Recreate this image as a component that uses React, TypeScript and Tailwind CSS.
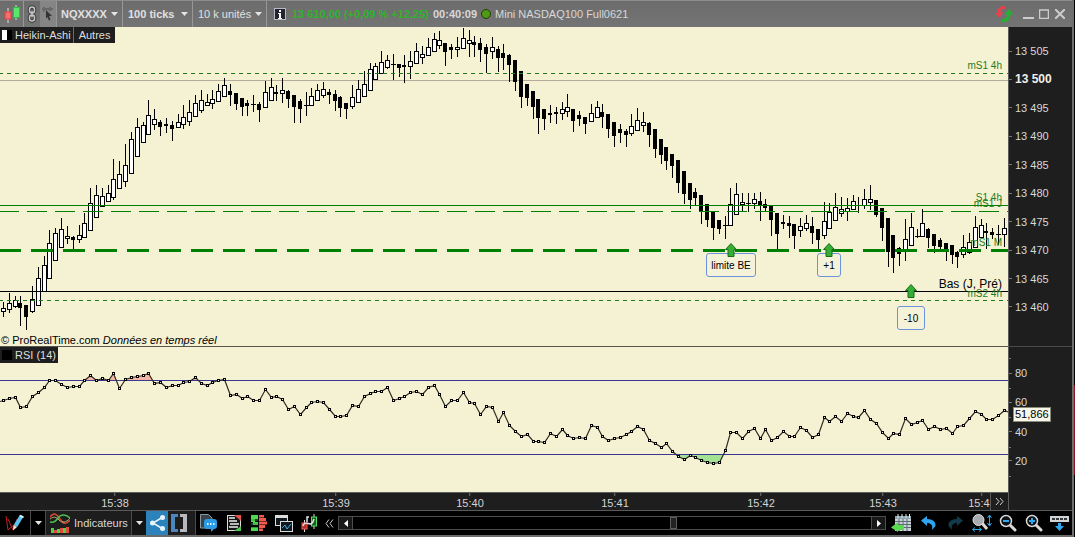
import type { ReactNode } from "react";

type Candle = [high: number, top: number, bottom: number, low: number, up: 0 | 1];

// Heikin-Ashi candles, in plot units
const candles: Candle[] = [
  [302, 308, 311, 316, 1], [293, 303, 309, 312, 1], [296, 300, 306, 307, 1], [296, 303, 307, 325, 0],
  [305, 305, 316, 329, 0], [286, 299, 311, 312, 1], [267, 278, 305, 305, 1], [256, 265, 291, 291, 1],
  [230, 243, 278, 278, 1], [228, 233, 260, 260, 1], [218, 229, 247, 247, 1], [226, 236, 238, 243, 1],
  [236, 237, 239, 249, 0], [225, 235, 239, 242, 1], [213, 223, 237, 237, 1], [188, 203, 230, 230, 1],
  [185, 195, 217, 217, 1], [188, 196, 206, 206, 1], [185, 193, 201, 201, 1], [159, 179, 197, 199, 1],
  [161, 174, 188, 188, 1], [144, 165, 181, 186, 1], [132, 139, 173, 173, 1], [118, 127, 156, 156, 1],
  [122, 125, 142, 142, 1], [100, 115, 134, 134, 1], [109, 119, 124, 129, 1], [120, 122, 126, 135, 0],
  [118, 124, 125, 132, 0], [121, 125, 128, 140, 0], [114, 122, 127, 127, 1], [105, 117, 124, 128, 1],
  [100, 112, 121, 125, 1], [95, 103, 116, 116, 1], [90, 100, 110, 112, 1], [94, 102, 105, 105, 1],
  [90, 99, 103, 108, 1], [84, 91, 101, 101, 1], [78, 85, 96, 96, 1], [84, 91, 94, 105, 0],
  [93, 93, 103, 109, 0], [98, 98, 106, 115, 0], [100, 103, 105, 115, 0], [95, 104, 104, 111, 0],
  [102, 104, 109, 121, 0], [81, 92, 107, 107, 1], [78, 87, 100, 100, 1], [85, 92, 93, 100, 0],
  [78, 90, 93, 102, 1], [90, 91, 98, 107, 0], [95, 95, 106, 122, 0], [99, 101, 108, 122, 0],
  [92, 105, 105, 115, 0], [88, 96, 105, 105, 1], [84, 90, 100, 100, 1], [82, 89, 95, 97, 1],
  [89, 92, 94, 103, 0], [90, 94, 100, 110, 0], [96, 97, 107, 116, 0], [103, 103, 108, 118, 0],
  [85, 97, 106, 108, 1], [80, 89, 102, 102, 1], [71, 84, 96, 96, 1], [63, 69, 90, 90, 1],
  [63, 66, 79, 79, 1], [51, 62, 73, 73, 1], [55, 60, 67, 68, 1], [54, 64, 64, 79, 0],
  [64, 64, 67, 76, 0], [55, 65, 66, 82, 0], [51, 61, 66, 78, 1], [43, 51, 63, 63, 1],
  [46, 54, 57, 63, 1], [38, 47, 55, 55, 1], [33, 39, 51, 51, 1], [31, 40, 45, 48, 1],
  [43, 43, 51, 65, 0], [44, 47, 49, 58, 0], [37, 47, 49, 56, 1], [28, 38, 48, 48, 1],
  [30, 40, 43, 56, 1], [36, 42, 44, 56, 0], [38, 43, 49, 61, 0], [44, 47, 53, 72, 0],
  [37, 47, 51, 58, 1], [46, 49, 57, 71, 0], [44, 53, 57, 69, 0], [54, 55, 64, 81, 0],
  [60, 60, 81, 90, 0], [71, 71, 96, 107, 0], [84, 84, 97, 105, 0], [91, 91, 106, 118, 0],
  [99, 99, 117, 133, 0], [109, 109, 118, 129, 0], [105, 113, 114, 122, 0], [107, 112, 113, 123, 0],
  [102, 109, 113, 119, 1], [94, 107, 111, 116, 1], [109, 109, 120, 131, 0], [111, 115, 118, 125, 0],
  [117, 117, 123, 133, 0], [104, 113, 121, 121, 1], [101, 107, 117, 117, 1], [104, 112, 116, 127, 0],
  [114, 114, 128, 137, 0], [122, 122, 135, 146, 0], [124, 129, 132, 142, 0], [129, 131, 134, 146, 0],
  [114, 126, 133, 135, 1], [108, 120, 130, 130, 1], [112, 122, 125, 131, 1], [122, 123, 134, 146, 0],
  [129, 129, 148, 157, 0], [139, 139, 154, 163, 0], [147, 147, 160, 169, 0], [154, 154, 165, 177, 0],
  [160, 160, 182, 192, 0], [171, 171, 193, 203, 0], [183, 183, 199, 208, 0], [188, 192, 197, 204, 0],
  [195, 195, 211, 223, 0], [204, 204, 219, 226, 0], [212, 212, 227, 239, 0], [220, 220, 228, 233, 0],
  [216, 225, 225, 238, 0], [188, 204, 225, 225, 1], [183, 194, 214, 214, 1], [193, 202, 204, 210, 1],
  [193, 203, 203, 211, 0], [193, 199, 203, 208, 1], [192, 201, 205, 220, 0], [199, 204, 207, 211, 0],
  [206, 206, 219, 235, 0], [213, 213, 233, 248, 0], [215, 222, 223, 228, 0], [216, 223, 225, 237, 0],
  [224, 224, 235, 248, 0], [218, 226, 230, 236, 1], [215, 223, 228, 230, 1], [217, 226, 232, 243, 0],
  [229, 229, 239, 248, 0], [202, 221, 235, 238, 1], [203, 212, 228, 228, 1], [193, 207, 220, 220, 1],
  [197, 209, 213, 216, 1], [198, 208, 211, 220, 1], [195, 201, 209, 209, 1], [197, 205, 205, 212, 0],
  [189, 199, 205, 208, 1], [185, 199, 202, 209, 1], [200, 200, 214, 216, 0], [208, 208, 227, 240, 0],
  [218, 218, 251, 266, 0], [235, 235, 257, 272, 0], [247, 248, 253, 265, 0], [219, 239, 249, 260, 1],
  [213, 227, 245, 245, 1], [229, 236, 236, 237, 0], [209, 223, 236, 236, 1], [228, 229, 237, 247, 0],
  [234, 234, 245, 252, 0], [238, 240, 246, 251, 0], [243, 243, 250, 260, 0], [245, 245, 254, 263, 0],
  [251, 252, 256, 267, 0], [235, 247, 254, 257, 1], [233, 242, 252, 253, 1], [216, 227, 247, 247, 1],
  [219, 225, 237, 237, 1], [223, 231, 232, 248, 0], [228, 232, 234, 238, 0], [225, 234, 234, 244, 0],
  [218, 228, 234, 246, 1],
];

const rsi = [
  400, 398, 397, 407, 406, 396, 392, 387, 380, 380, 384, 387, 386, 386, 380, 375, 380, 378, 380, 373,
  388, 379, 377, 376, 375, 373, 383, 382, 387, 385, 385, 382, 381, 377, 383, 385, 382, 380, 379, 395,
  394, 398, 396, 400, 400, 389, 397, 396, 399, 409, 406, 414, 407, 402, 401, 402, 409, 416, 416, 415,
  405, 406, 396, 393, 391, 391, 387, 400, 398, 396, 392, 391, 394, 387, 385, 394, 406, 400, 400, 392,
  402, 403, 414, 406, 407, 421, 412, 425, 431, 436, 434, 441, 441, 442, 433, 436, 429, 435, 438, 437,
  438, 425, 427, 436, 440, 438, 437, 434, 431, 426, 429, 440, 443, 447, 443, 451, 456, 459, 455, 457,
  460, 462, 463, 462, 450, 432, 432, 438, 431, 428, 438, 429, 440, 437, 431, 436, 436, 427, 430, 437,
  434, 417, 421, 416, 421, 413, 416, 417, 410, 419, 423, 432, 438, 433, 434, 418, 424, 422, 420, 429,
  426, 429, 428, 433, 426, 425, 418, 411, 414, 419, 419, 415, 410,
];

const PLOT = { width: 1008, top: 27, height: 319 };
const RSI = { top: 347, height: 145, high: 380, low: 454 };

const barX = (i: number) => Math.floor(3.4 + i * 5.82);
const left = (x: number) => `${(x / PLOT.width) * 100}%`;
const top = (y: number) => `${((y - PLOT.top) / PLOT.height) * 100}%`;

const levels = [
  { label: "mS1 4h", y: 66 },
  { label: "S1 4h", y: 198 },
  { label: "mS1 J", y: 204 },
  { label: "mS1 M", y: 243 },
  { label: "mS2 4h", y: 294 },
];

const notes = [
  { text: "limite BE", x: 731, arrowY: 243, y: 253, box: "w-[50px]" },
  { text: "+1", x: 829, arrowY: 243, y: 253, box: "w-6" },
  { text: "-10", x: 911, arrowY: 284, y: 306, box: "w-7" },
];

const prices = ["13 505", "13 500", "13 495", "13 490", "13 485", "13 480", "13 475", "13 470", "13 465", "13 460"];

const times = [
  { label: "15:38", x: 115 },
  { label: "15:39", x: 336 },
  { label: "15:40", x: 470 },
  { label: "15:41", x: 615 },
  { label: "15:42", x: 761 },
  { label: "15:43", x: 883 },
  { label: "15:44", x: 982 },
];

function PriceChart() {
  return (
    <svg
      className="absolute inset-0 h-full w-full"
      viewBox="0 27 1008 319"
      preserveAspectRatio="none"
      shapeRendering="crispEdges"
      aria-hidden="true"
    >
      <rect x="0" y="80" width="1008" height="1" fill="#b5ab9c" />
      {candles.map(([high, bodyTop, bottom, low, up], i) => {
        const x = barX(i);
        return (
          <g key={i}>
            <rect x={x} y={high} width="1" height={low - high + 1} fill="#000" />
            {up ? (
              <>
                <rect x={x - 2} y={bodyTop} width="5" height={bottom - bodyTop + 1} fill="#000" />
                <rect x={x - 1} y={bodyTop + 1} width="3" height={bottom - bodyTop - 1} fill="#fff" />
              </>
            ) : (
              <rect x={x - 2} y={bodyTop} width={bottom === bodyTop ? 5 : 4} height={bottom - bodyTop + 1} fill="#000" />
            )}
          </g>
        );
      })}
      <path d="M0 73.5H1008M0 300.5H1008" stroke="#1f7a17" strokeDasharray="4 4" strokeDashoffset="1" />
      <path d="M0 205.5H1008" stroke="#008000" />
      <path d="M0 211.5H1008" stroke="#008000" strokeDasharray="20 8" strokeDashoffset="1" />
      <path d="M0 250.5H1008" stroke="#008000" strokeWidth="3" strokeDasharray="22 10" strokeDashoffset="1" />
      <path d="M0 291.5H1008" stroke="#000" />
    </svg>
  );
}

function RsiChart() {
  const line = rsi.map((y, i) => `${barX(i) + 0.5},${y + 0.5}`).join(" ");
  const area = `0,401.5 ${line} 1008,412`;
  return (
    <svg
      className="absolute inset-0 h-full w-full"
      viewBox="0 347 1008 145"
      preserveAspectRatio="none"
      aria-hidden="true"
    >
      <clipPath id="overbought">
        <rect x="0" y={RSI.top} width="1008" height={RSI.high - RSI.top} />
      </clipPath>
      <clipPath id="oversold">
        <rect x="0" y={RSI.low} width="1008" height="38" />
      </clipPath>
      <polygon points={`0,380 ${area} 1008,492 0,492`} fill="#f2b8a4" clipPath="url(#overbought)" />
      <polygon points={`0,347 ${area} 1008,347`} fill="#a3e292" clipPath="url(#oversold)" />
      <path d="M0 380.5H1008M0 454.5H1008" stroke="#3a3795" shapeRendering="crispEdges" />
      <polyline points={area} fill="none" stroke="#2e2b20" strokeWidth="1.2" />
      <g shapeRendering="crispEdges">
        {rsi.map((y, i) => (
          <g key={i}>
            <rect x={barX(i) - 1} y={y - 1} width="3" height="3" fill="#000" />
            <rect x={barX(i)} y={y} width="1" height="1" fill="#f5f2d4" />
          </g>
        ))}
      </g>
    </svg>
  );
}

function Caret() {
  return (
    <svg className="pointer-events-none h-1 w-[7px]" viewBox="0 0 7 4" aria-hidden="true">
      <path d="M0 0h7L3.5 4z" fill="#e4e4e4" />
    </svg>
  );
}

function Picker({ label, value, className }: { label: string; value: string; className: string }) {
  return (
    <div className={`relative flex shrink-0 items-center border-r border-[#989898] ${className}`}>
      <select
        aria-label={label}
        className="h-4 w-full appearance-none bg-transparent pl-1 leading-4 text-[#e0e0e0] outline-none"
        defaultValue={value}
      >
        <option>{value}</option>
      </select>
      <span className="pointer-events-none absolute right-1 flex">
        <Caret />
      </span>
    </div>
  );
}

function Tool({ label, className, children }: { label: string; className: string; children: ReactNode }) {
  return (
    <button type="button" aria-label={label} className={`flex h-full shrink-0 items-center justify-center ${className}`}>
      {children}
    </button>
  );
}

function Header() {
  return (
    <header className="flex h-[27px] shrink-0 items-stretch border-t border-[#8e8e8e] bg-linear-to-b from-[#6c6c6c] to-[#747474] text-[11px] text-[#d8d8d8]">
      <Tool label="Graphique" className="w-[23px]">
        <svg width="18" height="18" viewBox="0 0 18 18" aria-hidden="true">
          <path d="M5 3v15M13 0v15" stroke="#ddd" />
          <rect x="2" y="7" width="6" height="7" fill="#f47070" stroke="#e63c3c" />
          <rect x="10.500" y="2.500" width="6" height="10" fill="#5ee66a" stroke="#22c43a" />
        </svg>
      </Tool>
      <Tool label="Lier" className="w-[17px] border-l border-[#989898]">
        <svg width="10" height="18" viewBox="0 0 10 18" fill="none" aria-hidden="true">
          <g stroke="#3a3a3a" strokeWidth="3.500">
            <rect x="2.500" y="2" width="5" height="6" rx="2.500" />
            <rect x="2.500" y="10" width="5" height="6" rx="2.500" />
          </g>
          <g stroke="#c4c4c4" strokeWidth="1.500">
            <rect x="2.500" y="2" width="5" height="6" rx="2.500" />
            <rect x="2.500" y="10" width="5" height="6" rx="2.500" />
            <path d="M5 6v6" />
          </g>
        </svg>
      </Tool>
      <Tool label="Curseur" className="w-[17px] border-r border-[#989898] bg-[#858585]">
        <svg width="12" height="14" viewBox="0 0 12 14" aria-hidden="true">
          <path d="M0 2h11M2 0v5M8 0v4" stroke="#686868" strokeWidth="2" />
          <path d="M4 3l6 6-3 .3 1.500 3.500-1.500.7L5.500 10 4 11.500z" fill="#333" />
        </svg>
      </Tool>
      <Picker label="Instrument" value="NQXXXX" className="w-[66px] font-bold" />
      <Picker label="Unité de temps" value="100 ticks" className="w-[70px] pl-px font-bold" />
      <Picker label="Historique" value="10 k unités" className="w-[74px] pl-px" />
      <div className="flex flex-1 items-center gap-1 pl-[7px] whitespace-nowrap">
        <button type="button" aria-label="Informations" className="mr-0.5 flex size-3 items-center justify-center border border-[#b9b9cc] bg-[#24242e]">
          <svg width="6" height="9" viewBox="0 0 6 9" aria-hidden="true">
            <path d="M2 0h2v2H2zM1 3h3v5h1v1H1V8h1V4H1z" fill="#fff" />
          </svg>
        </button>
        <span className="font-bold text-[#2db42d]">13 610,00 (+0,09 % +12,25)</span>
        <span className="font-bold">00:40:09</span>
        <span className="size-2.5 rounded-full border border-[#1e3c0c] bg-[#4f9a10]" />
        <span>Mini NASDAQ100 Full0621</span>
      </div>
      <div className="flex items-center gap-1 pr-1.5">
        <Tool label="Actualiser" className="mr-1 w-5">
          <svg width="18" height="16" viewBox="0 0 18 16" fill="none" aria-hidden="true">
            <path d="M10 1.500C5 1 3.500 4 4 8" stroke="#e8414e" strokeWidth="3" />
            <path d="M0 7l8-1-3.500 6z" fill="#e8414e" />
            <path d="M7 14.500c5 .5 7-2.500 6.500-7" stroke="#22b32d" strokeWidth="3" />
            <path d="M9.500 8.500L18 9l-4-6z" fill="#22b32d" />
          </svg>
        </Tool>
        <Tool label="Réduire" className="w-3">
          <svg width="11" height="10" viewBox="0 0 11 10" aria-hidden="true">
            <path d="M0 9h11" stroke="#ccc" strokeWidth="2" />
          </svg>
        </Tool>
        <Tool label="Agrandir" className="w-3">
          <svg width="10" height="10" viewBox="0 0 10 10" fill="none" aria-hidden="true">
            <path d="M.5 1v8.500h9V1M0 1h10" stroke="#ccc" strokeWidth="1.500" />
          </svg>
        </Tool>
        <Tool label="Fermer" className="w-3">
          <svg width="10" height="10" viewBox="0 0 10 10" aria-hidden="true">
            <path d="M0 0l10 10M10 0L0 10" stroke="#ccc" strokeWidth="2" />
          </svg>
        </Tool>
      </div>
    </header>
  );
}

function Footer() {
  return (
    <footer className="flex h-[27px] shrink-0 items-stretch border-t border-b-2 border-t-[#5a5a5a] border-b-[#6a6a6a] bg-black text-[11px] text-[#d8d8d8]">
      <Tool label="Dessiner" className="w-[30px]">
        <svg width="20" height="18" viewBox="0 0 20 18" fill="none" aria-hidden="true">
          <path d="M1 2l2 14 7-6M3 5l5 11L12 5" stroke="#c42020" />
          <path d="M10.500 12l6-10" stroke="#58c4f4" strokeWidth="4" />
          <path d="M8.500 11l3.500 2-4 3.500z" fill="#f6e8cc" />
          <path d="M15 1.500l3.500 2" stroke="#e6f8ff" strokeWidth="2" />
        </svg>
      </Tool>
      <Tool label="Outils de dessin" className="w-4 border-x border-[#4a4a4a]">
        <Caret />
      </Tool>
      <button type="button" className="flex w-[85px] shrink-0 items-center gap-1 bg-[#1d1d1d] pl-1">
        <svg width="20" height="20" viewBox="0 0 20 20" fill="none" aria-hidden="true">
          <path d="M0 4c4-5 7-3 10 2s6 6 10 1" stroke="#d8482e" strokeWidth="1.500" />
          <path d="M0 9c4 1 6-1 8-4s7-5 12 0" stroke="#4cc04c" strokeWidth="1.500" />
          <path d="M0 6c4-3 6-2 9 1s7 3 11-2" stroke="#b0a878" />
          <path d="M2.500 20v-5M8.500 20v-4M14.500 20v-5" stroke="#4fd24a" strokeWidth="3" />
          <path d="M5.500 20v-3M11.500 20v-5M17.500 20v-6" stroke="#e04a3c" strokeWidth="3" />
        </svg>
        Indicateurs
      </button>
      <Tool label="Liste des indicateurs" className="w-[15px] border-l border-[#4a4a4a] bg-[#141414]">
        <Caret />
      </Tool>
      <Tool label="Partager" className="w-[22px] bg-[#2c82ba]">
        <svg width="15" height="16" viewBox="0 0 15 16" aria-hidden="true">
          <path d="M13 2L3 8l10 6" stroke="#e8f4fc" strokeWidth="1.500" fill="none" />
          <circle cx="12.500" cy="2.500" r="2.500" fill="#e8f4fc" />
          <circle cx="2.500" cy="8" r="2.500" fill="#e8f4fc" />
          <circle cx="12.500" cy="13.500" r="2.500" fill="#e8f4fc" />
        </svg>
      </Tool>
      <Tool label="Crochets" className="w-7 border-r border-[#4a4a4a] bg-[#1d1d1d] pr-1.5">
        <svg width="18" height="18" viewBox="0 0 18 18" aria-hidden="true">
          <path d="M1 0h7v3H5v12h3v3H1z" fill="#4c86bc" />
          <path d="M17 0h-7v3h3v12h-3v3h7z" fill="#b8b8c0" />
        </svg>
      </Tool>
      <Tool label="Commentaires" className="w-[25px]">
        <svg width="17" height="18" viewBox="0 0 17 18" aria-hidden="true">
          <path d="M.5 14V.5h8L12 4v10z" fill="#39434c" stroke="#8a96a0" />
          <path d="M7 5h7q3 0 3 3v4q0 3-3 3l-3 3v-3H6q-2-.5-2-3V8q0-3 3-3z" fill="#2b9be8" />
          <path d="M7 9h1.500v2H7zM10 9h1.500v2H10zM13 9h1.500v2H13z" fill="#e8f6ff" />
        </svg>
      </Tool>
      <Tool label="Liste" className="w-[25px]">
        <svg width="14" height="16" viewBox="0 0 14 16" aria-hidden="true">
          <rect x=".5" y=".5" width="13" height="15" fill="#151515" stroke="#ddd" />
          <path d="M2 3h6M2 6h8M3 9h9M2 12h9" stroke="#eee" strokeWidth="1.500" />
          <path d="M7 0h7v6z" fill="#e4524c" />
          <path d="M14 16H7l7-5z" fill="#4cc850" />
        </svg>
      </Tool>
      <Tool label="Carnet" className="w-[25px]">
        <svg width="16" height="16" viewBox="0 0 16 16" aria-hidden="true">
          <path d="M0 0h7v4H4v3h3v3H2v2h5v4H0v-4h2V7H0z" fill="#52d84e" />
          <path d="M8 1h5M8 4.500h7M8 8h8M8 11.500h6M8 15h4" stroke="#ee5c50" strokeWidth="3" />
          <path d="M0 5h7M0 9h7M0 12.500h7" stroke="#2f9a35" />
        </svg>
      </Tool>
      <Tool label="Fenêtres" className="w-[25px]">
        <svg width="18" height="17" viewBox="0 0 18 17" aria-hidden="true">
          <rect x=".5" y=".5" width="12" height="10" fill="#101820" stroke="#dcdcdc" />
          <path d="M1 2h11" stroke="#dcdcdc" strokeWidth="2" />
          <rect x="5.500" y="6.500" width="12" height="10" fill="#101820" stroke="#dcdcdc" />
          <path d="M7 13l3-3 2 4 4-5" stroke="#4eaadc" fill="none" />
        </svg>
      </Tool>
      <Tool label="Trading" className="w-[25px]">
        <svg width="16" height="18" viewBox="0 0 16 18" fill="none" aria-hidden="true">
          <path d="M3.500 6v12M13 0v15" stroke="#ddd" />
          <rect x="1" y="9" width="5" height="6" fill="#b42828" stroke="#f05c50" />
          <rect x="10.500" y="3" width="5" height="9" fill="#1c5c22" stroke="#52e060" />
          <path d="M2 12c3-8 8 4 11-7M8 3H6v5" stroke="#e8e8e8" strokeWidth="1.500" />
        </svg>
      </Tool>
      <Tool label="Replier" className="w-[17px]">
        <svg width="9" height="9" viewBox="0 0 9 9" fill="none" aria-hidden="true">
          <path d="M4 .5l-3 4 3 4M8 .5l-3 4 3 4" stroke="#c8c8c8" />
        </svg>
      </Tool>
      <div className="my-[5px] flex min-w-0 flex-1 border border-[#4c4c4c]">
        <Tool label="Défiler à gauche" className="w-3.5 border-r border-[#4c4c4c] bg-[#181818]">
          <svg width="4" height="7" viewBox="0 0 4 7" aria-hidden="true">
            <path d="M4 0v7L0 3.500z" fill="#fff" />
          </svg>
        </Tool>
        <input
          type="range"
          aria-label="Défilement"
          defaultValue="62"
          className="h-full min-w-0 flex-1 appearance-none bg-black [&::-webkit-slider-thumb]:h-[12px] [&::-webkit-slider-thumb]:w-[7px] [&::-webkit-slider-thumb]:appearance-none [&::-webkit-slider-thumb]:border [&::-webkit-slider-thumb]:border-[#5c5c5c] [&::-webkit-slider-thumb]:bg-[#222]"
        />
        <Tool label="Défiler à droite" className="w-3.5 border-l border-[#4c4c4c] bg-[#181818]">
          <svg width="4" height="7" viewBox="0 0 4 7" aria-hidden="true">
            <path d="M0 0v7l4-3.500z" fill="#fff" />
          </svg>
        </Tool>
      </div>
      <Tool label="Calendrier" className="w-[30px]">
        <svg width="20" height="18" viewBox="0 0 20 18" aria-hidden="true">
          <path d="M4 2h16v15H4z" fill="#c9d2d6" />
          <path d="M4 2h16v3H4z" fill="#8fa4ae" />
          <path d="M7 0v4M11 0v4M15 0v4M18.500 0v4" stroke="#e8eef0" />
          <path d="M4 7.500h16M4 10.500h16M4 13.500h16M8 5v12M12 5v12M16 5v12" stroke="#5c6c74" />
          <path d="M0 13.500L7 8v3h6v5H7v2z" fill="#5bd950" />
        </svg>
      </Tool>
      <Tool label="Annuler" className="w-[26px]">
        <svg width="16" height="14" viewBox="0 0 16 14" aria-hidden="true">
          <path d="M0 4.500L6 0v3c6 0 9 3 8.500 7L11 14c1-5-1-7-5-7v3z" fill="#2ea4ee" />
        </svg>
      </Tool>
      <Tool label="Rétablir" className="w-[26px]">
        <svg width="16" height="14" viewBox="0 0 16 14" aria-hidden="true">
          <path d="M16 4.500L10 0v3C4 3 1 6 1.500 10L5 14C4 9 6 7 10 7v3z" fill="#14394a" />
        </svg>
      </Tool>
      <Tool label="Ajuster" className="w-[27px]">
        <svg width="20" height="18" viewBox="0 0 20 18" fill="none" aria-hidden="true">
          <path d="M10 9l5 6" stroke="#dcd8d4" strokeWidth="3" />
          <circle cx="6.500" cy="6" r="5.500" fill="#a8acb0" stroke="#e0e0e0" />
          <path d="M17.500 2v9M15.500 4l2-3 2 3M15.500 9l2 3 2-3M1 15.500h8M3 13.500l-2.500 2 2.500 2M7 13.500l2.500 2-2.500 2" stroke="#29a8ec" />
        </svg>
      </Tool>
      <Tool label="Zoom arrière" className="w-[26px]">
        <svg width="18" height="18" viewBox="0 0 18 18" fill="none" aria-hidden="true">
          <path d="M11 11l5 5" stroke="#dcd8d4" strokeWidth="3" strokeLinecap="round" />
          <circle cx="7" cy="7" r="5.500" fill="#0c1216" stroke="#d8d8d8" strokeWidth="1.500" />
          <path d="M4 7h6" stroke="#2ea8f0" strokeWidth="2" />
        </svg>
      </Tool>
      <Tool label="Zoom avant" className="w-[26px]">
        <svg width="18" height="18" viewBox="0 0 18 18" fill="none" aria-hidden="true">
          <path d="M11 11l5 5" stroke="#dcd8d4" strokeWidth="3" strokeLinecap="round" />
          <circle cx="7" cy="7" r="5.500" fill="#0c1216" stroke="#d8d8d8" strokeWidth="1.500" />
          <path d="M4 7h6M7 4v6" stroke="#2ea8f0" strokeWidth="2" />
        </svg>
      </Tool>
      <Tool label="Barre d'outils" className="w-[25px]">
        <svg width="19" height="15" viewBox="0 0 19 15" aria-hidden="true">
          <rect width="19" height="6" fill="#d0d4d6" />
          <path d="M2 2h3v2H2zM6 2h3v2H6zM10 2h3v2h-3zM14 2h3v2h-3z" fill="#32383c" />
          <path d="M8 7h3v3h3l-4.500 5L5 10h3z" fill="#2ea8f0" />
        </svg>
      </Tool>
    </footer>
  );
}

export default function App() {
  return (
    <div className="flex h-screen bg-black font-['Liberation_Sans',Arial,sans-serif]">
      <div className="flex min-w-0 flex-1 flex-col">
        <Header />

        <main className="flex min-h-0 flex-1 bg-[#1e1e1e]">
          <div className="flex min-w-0 flex-1 flex-col">
            {/* Price panel */}
            <section className="relative min-h-0 flex-1 overflow-hidden bg-[#f5f2d4]">
              <PriceChart />
              <div className="relative flex h-4 w-fit text-[11px] leading-4 text-[#dedede]">
                <button type="button" className="flex items-center gap-[3px] border-r border-[#6a6a6a] bg-[#1e1e1e] pr-0.5 pl-0.5">
                  <span className="flex h-2.5 w-2.5 bg-black">
                    <span className="w-[5px] bg-white" />
                  </span>
                  Heikin-Ashi
                </button>
                <button type="button" className="bg-[#1e1e1e] px-[5px]">Autres</button>
              </div>

              {levels.map((l) => (
                <span
                  key={l.label}
                  className="absolute right-1.5 -translate-y-1/2 text-[10px] leading-3 text-[#1e7d1e]"
                  style={{ top: top(l.y) }}
                >
                  {l.label}
                </span>
              ))}
              <span className="absolute right-1.5 -translate-y-1/2 text-xs leading-3 text-black" style={{ top: top(284) }}>
                Bas (J, Pré)
              </span>

              {notes.map((n) => (
                <div key={n.text}>
                  <span
                    className={`absolute flex h-6 -translate-x-1/2 items-center justify-center rounded-[3px] border border-[#6d92dc] bg-[#f5f2da] text-[10px] whitespace-nowrap text-black ${n.box}`}
                    style={{ left: left(n.x), top: top(n.y) }}
                  >
                    {n.text}
                  </span>
                  <svg
                    className="absolute h-3.5 w-3 -translate-x-1/2"
                    viewBox="0 0 12 14"
                    style={{ left: left(n.x), top: top(n.arrowY) }}
                    aria-hidden="true"
                  >
                    <path d="M6 .5l5.500 6H9v7H3v-7H.5z" fill="#35ae35" stroke="#1a6b1a" />
                  </svg>
                </div>
              ))}

              <p className="absolute bottom-0 left-px text-[11px] leading-3 text-black">
                © ProRealTime.com <em>Données en temps réel</em>
              </p>
            </section>

            {/* RSI panel */}
            <section className="relative h-[146px] shrink-0 border-t border-[#57564c] bg-[#f5f2d4]">
              <RsiChart />
              <button type="button" className="relative flex h-4 items-center gap-[3px] bg-[#1e1e1e] pr-0.5 pl-0.5 text-[11px] leading-4 text-[#dedede]">
                <span className="size-2.5 bg-black" />
                RSI (14)
              </button>
            </section>

            {/* Time axis */}
            <div className="relative h-[18px] shrink-0 overflow-hidden border-t border-[#5c5c5c] text-[11px] text-[#d4d4d4]">
              {times.map((t) => (
                <span
                  key={t.label}
                  className="absolute top-0 flex -translate-x-1/2 flex-col items-center leading-[14px] before:h-[3px] before:w-px before:bg-[#777]"
                  style={{ left: left(t.x) }}
                >
                  {t.label}
                </span>
              ))}
              <button
                type="button"
                aria-label="Fin du graphique"
                className="absolute right-0 flex h-full w-[18px] items-center justify-center border-l border-[#5a5a5a] bg-[#1e1e1e]"
              >
                <svg width="9" height="7" viewBox="0 0 9 7" fill="none" aria-hidden="true">
                  <path d="M1 0l3 3.500L1 7M5 0l3 3.500L5 7" stroke="#d0d0d0" />
                </svg>
              </button>
            </div>
          </div>

          {/* Value axes */}
          <aside className="flex w-16 shrink-0 flex-col border-l border-[#5c5c5c] text-[11px] leading-4 text-[#d8d8d8]">
            <ul className="flex flex-1 flex-col justify-between pt-4 pb-[31px]">
              {prices.map((p) => (
                <li key={p} className="flex h-4 items-center gap-[3px] before:h-px before:w-[3px] before:bg-[#777]">
                  <span className={p === "13 500" ? "text-xs font-bold text-[#eee]" : ""}>{p}</span>
                </li>
              ))}
            </ul>
            <div className="relative h-[146px] shrink-0 border-t border-[#4a4a4a]">
              <ul className="flex h-full flex-col justify-between pt-[18px] pb-[23px]">
                {[80, 60, 40, 20].map((v) => (
                  <li key={v} className="flex h-4 items-center gap-[3px] before:h-px before:w-[3px] before:bg-[#777]">
                    {v}
                  </li>
                ))}
              </ul>
              <div className="absolute top-[11px] left-0 flex h-[119px] flex-col justify-between">
                {[90, 70, 50, 30, 10].map((v) => (
                  <span key={v} className="h-px w-0.5 bg-[#777]" />
                ))}
              </div>
              <output className="absolute top-[60px] left-1 border border-[#8a8a7a] bg-[#f6f6ea] px-px leading-[13px] text-black">
                51,866
              </output>
            </div>
            <div className="h-[18px] shrink-0" />
          </aside>
        </main>

        <Footer />
      </div>

      {/* Edge of the neighbouring window */}
      <div className="flex w-[3px] shrink-0 flex-col border-l-2 border-[#6e6e6e]">
        <div className="h-[385px]" />
        <div className="h-[90px] bg-[#8c1420]" />
      </div>
    </div>
  );
}
